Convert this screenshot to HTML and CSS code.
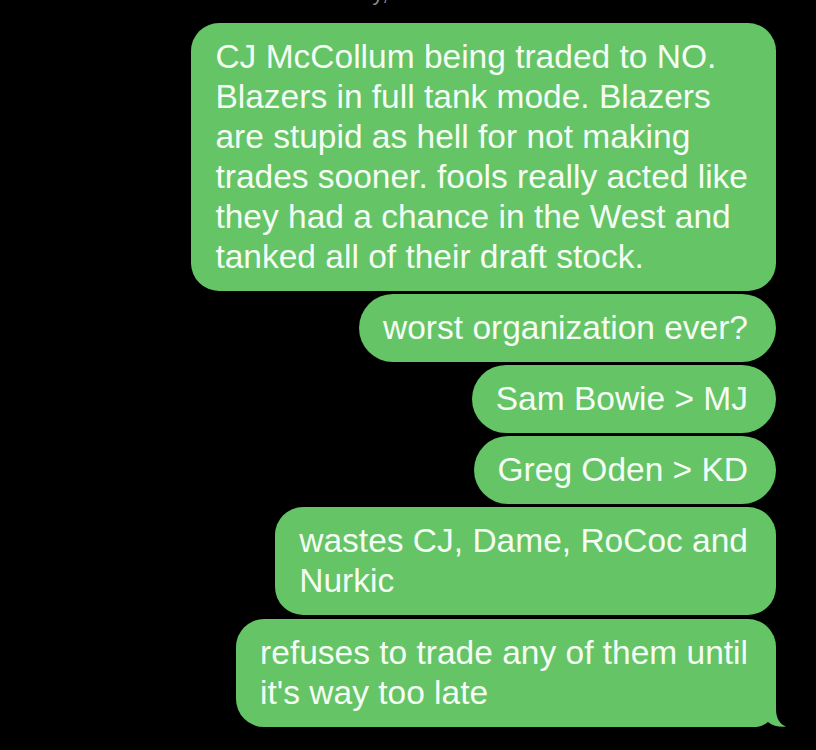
FILE: index.html
```html
<!DOCTYPE html>
<html lang="en">
<head>
  <meta charset="UTF-8" />
  <meta name="viewport" content="width=device-width, initial-scale=1.0"/>
  <title>Messages</title>
  <link rel="stylesheet" href="styles.css">
</head>
<body>

<div class="chat">
  <div class="stamp">Tuesday, 1:15 PM</div>

  <div class="thread">
    <div class="bubble">CJ McCollum being traded to NO.<br>Blazers in full tank mode. Blazers<br>are stupid as hell for not making<br>trades sooner. fools really acted like<br>they had a chance in the West and<br>tanked all of their draft stock.</div>
    <div class="bubble pill">worst organization ever?</div>
    <div class="bubble pill">Sam Bowie &gt; MJ</div>
    <div class="bubble pill">Greg Oden &gt; KD</div>
    <div class="bubble">wastes CJ, Dame, RoCoc and<br>Nurkic</div>
    <div class="bubble last">refuses to trade any of them until<br>it's way too late
      <!-- tail -->
      <svg class="tail" width="48" height="40" viewBox="0 0 48 40">
        <path d="M0 0 L36 0 L36 22 C36 32 40 37 46 39.6 C40 40.5 33 39 28 35 C24 38.5 19 40 14 40 L0 40 Z" fill="#65c466"/>
      </svg>
    </div>
  </div>
</div>

</body>
</html>
```

FILE: styles.css
```css
body {
  margin: 0;
  background-color: #000;
  font-family: "Liberation Sans", Arial, sans-serif;
  overflow: hidden;
}

.chat {
  padding-right: 40px;
}

.stamp {
  margin-top: -17px;
  margin-bottom: 20px;
  text-align: center;
  font-size: 22px;
  line-height: 20px;
  color: #8e8e93;
}

.thread {
  display: flex;
  flex-direction: column;
  align-items: flex-end;
  gap: 3px;
}

.bubble {
  position: relative;
  padding: 14px 28px 14px 24px;
  background: #65c466;
  color: #f4fdf4;
  font-size: 33.5px;
  line-height: 40px;
  border-radius: 28px;
  white-space: nowrap;
}

.bubble.pill {
  border-radius: 34px;
}

.bubble.last {
  margin-top: 1px;
}

.tail {
  position: absolute;
  right: -12px;
  bottom: 0;
  display: block;
}
```
